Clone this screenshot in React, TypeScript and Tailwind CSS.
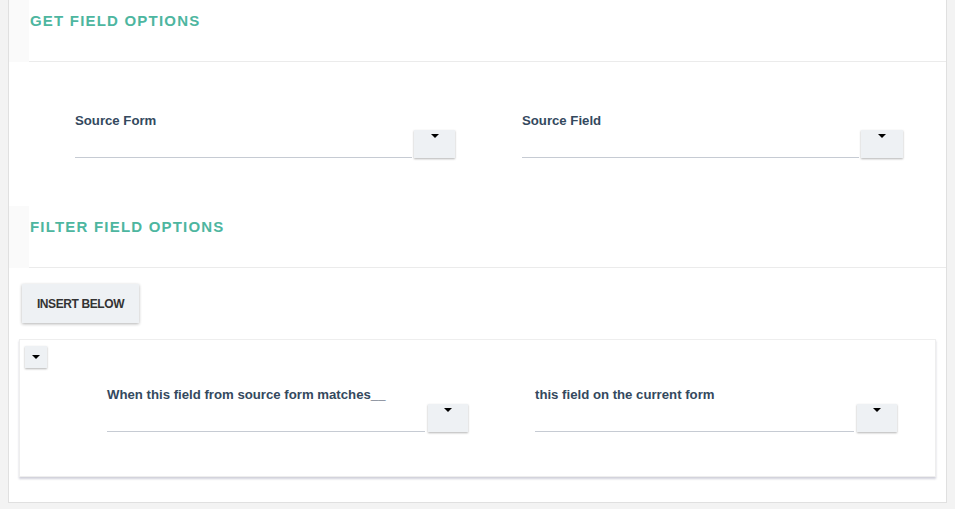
import React from "react";

function Caret() {
    return <span className="block w-0 h-0 border-x-[4px] border-t-[4px] border-x-transparent border-t-black" />;
}

function SectionHeader({ title }: { title: string }) {
    return (
        <div className="bg-[#fafafa]">
            <div className="ml-[20px] h-[62px] bg-white border-b border-[#ebebeb] pt-[11px]">
                <h2 className="text-[15px] leading-[20px] font-black uppercase tracking-[1.2px] text-[#4db6a0] ml-px">{title}</h2>
            </div>
        </div>
    );
}

function SelectField({ label, colWidth, fieldWidth, gap, btnWidth }: { label: string; colWidth: number; fieldWidth: number; gap: number; btnWidth: number }) {
    return (
        <div style={{ width: colWidth }} className="shrink-0">
            <label className="block text-[13.2px] leading-[18px] font-bold text-[#34495e]">{label}</label>
            <div style={{ width: fieldWidth }} className="flex items-end">
                <div className="flex-1 h-[28px] border-b border-[#c6cbd3]" />
                <button style={{ marginLeft: gap, width: btnWidth }} className="h-[28px] bg-[#eef1f4] shadow-[0_1px_2px_rgba(0,0,0,0.3)] flex justify-center pt-[4px]">
                    <Caret />
                </button>
            </div>
        </div>
    );
}

export default function App() {
    return (
        <div className="min-h-[509px] bg-[#f3f3f3] px-2 pb-[6px]" style={{ fontFamily: '"Liberation Sans", Arial, sans-serif' }}>
            <div className="bg-white border-x border-b border-[#e0e0e0]">
                <SectionHeader title="Get Field Options" />

                <div className="flex pl-[66px] pt-[50px] pb-[48px]">
                    <SelectField label="Source Form" colWidth={447} fieldWidth={380} gap={2} btnWidth={41} />
                    <SelectField label="Source Field" colWidth={447} fieldWidth={381} gap={2} btnWidth={42} />
                </div>

                <SectionHeader title="Filter Field Options" />

                <div className="pt-4 pl-[13px]">
                    <button className="w-[117px] h-[39px] bg-[#eef1f4] shadow-[0_1px_3px_rgba(0,0,0,0.3)] text-[12px] font-bold text-[#333] tracking-[-0.4px]">
                        INSERT BELOW
                    </button>
                </div>

                <div className="mx-[10px] mt-4 mb-[25px] bg-white border border-[#eeeeee] shadow-[0_2px_2px_rgba(120,120,150,0.35)] pt-[6px] pl-[5px] pb-[44px]">
                    <button className="w-[22px] h-[22px] bg-[#eef1f4] shadow-[0_1px_2px_rgba(0,0,0,0.3)] flex items-center justify-center">
                        <Caret />
                    </button>
                    <div className="flex pl-[82px] mt-[18px]">
                        <SelectField label="When this field from source form matches__" colWidth={428} fieldWidth={361} gap={3} btnWidth={40} />
                        <SelectField label="this field on the current form" colWidth={428} fieldWidth={362} gap={3} btnWidth={40} />
                    </div>
                </div>
            </div>
        </div>
    );
}
